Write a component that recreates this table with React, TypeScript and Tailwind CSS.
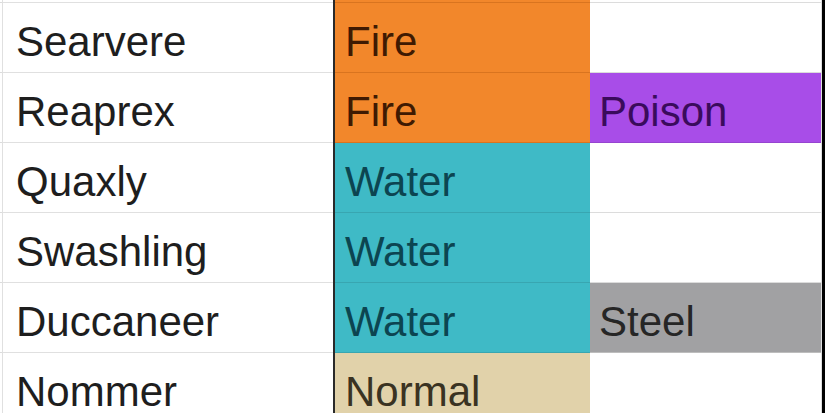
import React from 'react';

type Cell = { label: string; bg: string; text: string; line: string } | null;

type Row = { name: string; type1: Cell; type2: Cell };

const FIRE: Cell = { label: 'Fire', bg: 'bg-[#f2872b]', text: 'text-[#3f1a02]', line: 'border-[#d9741f]' };
const WATER: Cell = { label: 'Water', bg: 'bg-[#3fbac6]', text: 'text-[#0c4551]', line: 'border-[#38a6b1]' };
const NORMAL: Cell = { label: 'Normal', bg: 'bg-[#e1d2aa]', text: 'text-[#3a3322]', line: 'border-[#cbbd98]' };
const POISON: Cell = { label: 'Poison', bg: 'bg-[#a84de8]', text: 'text-[#3a0b5c]', line: 'border-[#9644d0]' };
const STEEL: Cell = { label: 'Steel', bg: 'bg-[#a1a1a3]', text: 'text-[#262626]', line: 'border-[#bdbdbd]' };

const rows: Row[] = [
    { name: 'Searvere', type1: FIRE, type2: null },
    { name: 'Reaprex', type1: FIRE, type2: POISON },
    { name: 'Quaxly', type1: WATER, type2: null },
    { name: 'Swashling', type1: WATER, type2: null },
    { name: 'Duccaneer', type1: WATER, type2: STEEL },
    { name: 'Nommer', type1: NORMAL, type2: null },
];

const TypeCell: React.FC<{ cell: Cell; className: string }> = ({ cell, className }) => (
    <div
        className={`${className} ${cell ? `${cell.bg} ${cell.line}` : 'bg-white border-[#dcdcdc]'} border-b flex items-center pt-2`}
    >
        {cell && <span className={cell.text}>{cell.label}</span>}
    </div>
);

export default function App() {
    return (
        <div
            className="w-[825px] h-[413px] overflow-hidden bg-white text-[42px] leading-none text-[#1e1e1e]"
            style={{ fontFamily: '"Liberation Sans", Arial, sans-serif' }}
        >
            {/* bottom of the row above */}
            <div className="flex h-[3px]">
                <div className="w-[2px] bg-white border-b border-[#dcdcdc]" />
                <div className="w-[331px] border-l border-b border-[#e0e0e0]" />
                <div className="w-[2px] bg-[#2a2a2a]" />
                <div className="w-[255px] bg-[#f2872b] border-b border-[#d9741f]" />
                <div className="w-[231px] bg-white border-b border-[#dcdcdc]" />
                <div className="w-[1px] bg-[#dedede]" />
                <div className="w-[3px] bg-black" />
            </div>
            {rows.map((row) => (
                <div key={row.name} className="flex h-[70px]">
                    <div className="w-[2px] bg-white border-b border-[#dcdcdc]" />
                    <div className="w-[331px] border-l border-b border-[#e0e0e0] flex items-center pt-2 pl-[13px]">
                        {row.name}
                    </div>
                    <div className="w-[2px] bg-[#2a2a2a]" />
                    <TypeCell cell={row.type1} className="w-[255px] pl-[10px]" />
                    <TypeCell cell={row.type2} className="w-[231px] pl-[9px]" />
                    <div className="w-[1px] bg-[#dedede]" />
                    <div className="w-[3px] bg-black" />
                </div>
            ))}
        </div>
    );
}
